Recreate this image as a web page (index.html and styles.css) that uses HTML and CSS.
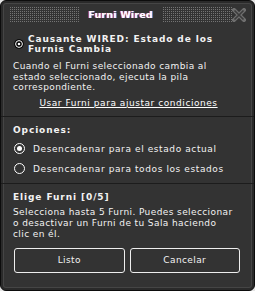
FILE: index.html
```html
<!DOCTYPE html>
<html lang="es">
<head>
    <meta charset="UTF-8">
    <meta name="viewport" content="width=device-width, initial-scale=1.0">
    <title>Furni Wired</title>
    <link rel="stylesheet" href="styles.css">
</head>
<body>

    <div class="window">
        <div class="header">
            <div class="dots"></div>
            <span class="title">Furni Wired</span>
            <div class="dots"></div>
            <svg class="close" width="14" height="14" viewBox="0 0 14 14">
                <path d="M2 2 L12 12 M12 2 L2 12" stroke="#6e6e6e" stroke-width="4" stroke-linecap="square"/>
                <path d="M2.5 2.5 L11.5 11.5 M11.5 2.5 L2.5 11.5" stroke="#3c3c3c" stroke-width="1.6"/>
            </svg>
        </div>

        <div class="section intro">
            <div class="trigger">
                <svg class="trigger-icon" width="10" height="10" viewBox="0 0 10 10">
                    <circle cx="5" cy="5" r="4.8" fill="#000"/>
                    <circle cx="5" cy="5" r="3.4" fill="none" stroke="#fff" stroke-width="1"/>
                    <circle cx="5" cy="5" r="1.3" fill="#fff"/>
                </svg>
                <h3>Causante WIRED: Estado de los<br>Furnis Cambia</h3>
            </div>
            <p class="desc">Cuando el Furni seleccionado cambia al<br>estado seleccionado, ejecuta la pila<br>correspondiente.</p>
            <a class="link" href="#">Usar Furni para ajustar condiciones</a>
        </div>

        <div class="section options">
            <h4>Opciones:</h4>
            <label class="radio"><span class="circle checked"></span>Desencadenar para el estado actual</label>
            <label class="radio"><span class="circle"></span>Desencadenar para todos los estados</label>
        </div>

        <div class="section pick">
            <h4>Elige Furni [0/5]</h4>
            <p class="desc">Selecciona hasta 5 Furni. Puedes seleccionar<br>o desactivar un Furni de tu Sala haciendo<br>clic en él.</p>
            <div class="buttons">
                <button>Listo</button>
                <button>Cancelar</button>
            </div>
        </div>
    </div>

</body>
</html>
```

FILE: styles.css
```css
body {
    margin: 0;
    padding: 0;
    background: #e4e4e4;
    font-family: "DejaVu Sans", Arial, sans-serif;
    font-size: 9px;
    letter-spacing: 0.4px;
    color: #f2f2f2;
}

.window {
    width: 255px;
    height: 291px;
    box-sizing: border-box;
    background: #333333;
    border: 1px solid #0c0c0c;
    border-radius: 6px;
    box-shadow: inset 0 0 0 2px #2a2a2a, inset 0 0 0 3px #454545;
    overflow: hidden;
}

.header {
    height: 27px;
    display: flex;
    align-items: center;
    padding: 0 8px 0 8px;
}

.dots {
    height: 15px;
    flex: 1;
    background-image: conic-gradient(#747474 25%, transparent 0);
    background-size: 2px 2px;
}

.title {
    font-weight: bold;
    font-size: 9.5px;
    letter-spacing: 0.2px;
    color: #fff;
    margin: 0 9px;
    text-shadow: -1px 0 #c44, 1px 0 #48f;
}

.section {
    padding: 6px 6px 8px 12px;
    border-bottom: 1px solid #1c1c1c;
    white-space: nowrap;
}

.trigger {
    display: flex;
    align-items: center;
    gap: 4px;
    padding-left: 1px;
}

h3,
h4 {
    margin: 0;
    font-size: 9px;
    line-height: 10px;
    font-weight: bold;
    letter-spacing: 0.9px;
}

.desc {
    margin: 7px 0 0 0;
    line-height: 10.5px;
}

.link {
    display: block;
    margin-top: 5px;
    padding-right: 4px;
    text-align: center;
    color: #fff;
    line-height: 10px;
    letter-spacing: 0.55px;
}

.options {
    padding-top: 8px;
}

.options h4 {
    margin-bottom: 1px;
}

.radio {
    display: flex;
    align-items: center;
    gap: 8px;
    height: 12px;
    margin-top: 8px;
    padding-left: 1px;
    letter-spacing: 0.6px;
}

.circle {
    width: 11px;
    height: 11px;
    box-sizing: border-box;
    border: 1px solid #fff;
    border-radius: 50%;
    display: flex;
    align-items: center;
    justify-content: center;
}

.circle.checked::after {
    content: "";
    width: 5px;
    height: 5px;
    border-radius: 50%;
    background: #fff;
}

.pick {
    border-bottom: none;
    padding-top: 8px;
}

.pick .desc {
    margin-top: 5px;
    line-height: 11px;
}

.buttons {
    display: flex;
    gap: 5px;
    margin-top: 8px;
    padding-left: 1px;
    padding-right: 8px;
}

button {
    flex: 1;
    height: 25px;
    background: #333333;
    color: #f2f2f2;
    border: 1px solid #eeeeee;
    border-radius: 3px;
    font-family: "DejaVu Sans", Arial, sans-serif;
    font-size: 9px;
    letter-spacing: 0.4px;
    cursor: pointer;
}
```
